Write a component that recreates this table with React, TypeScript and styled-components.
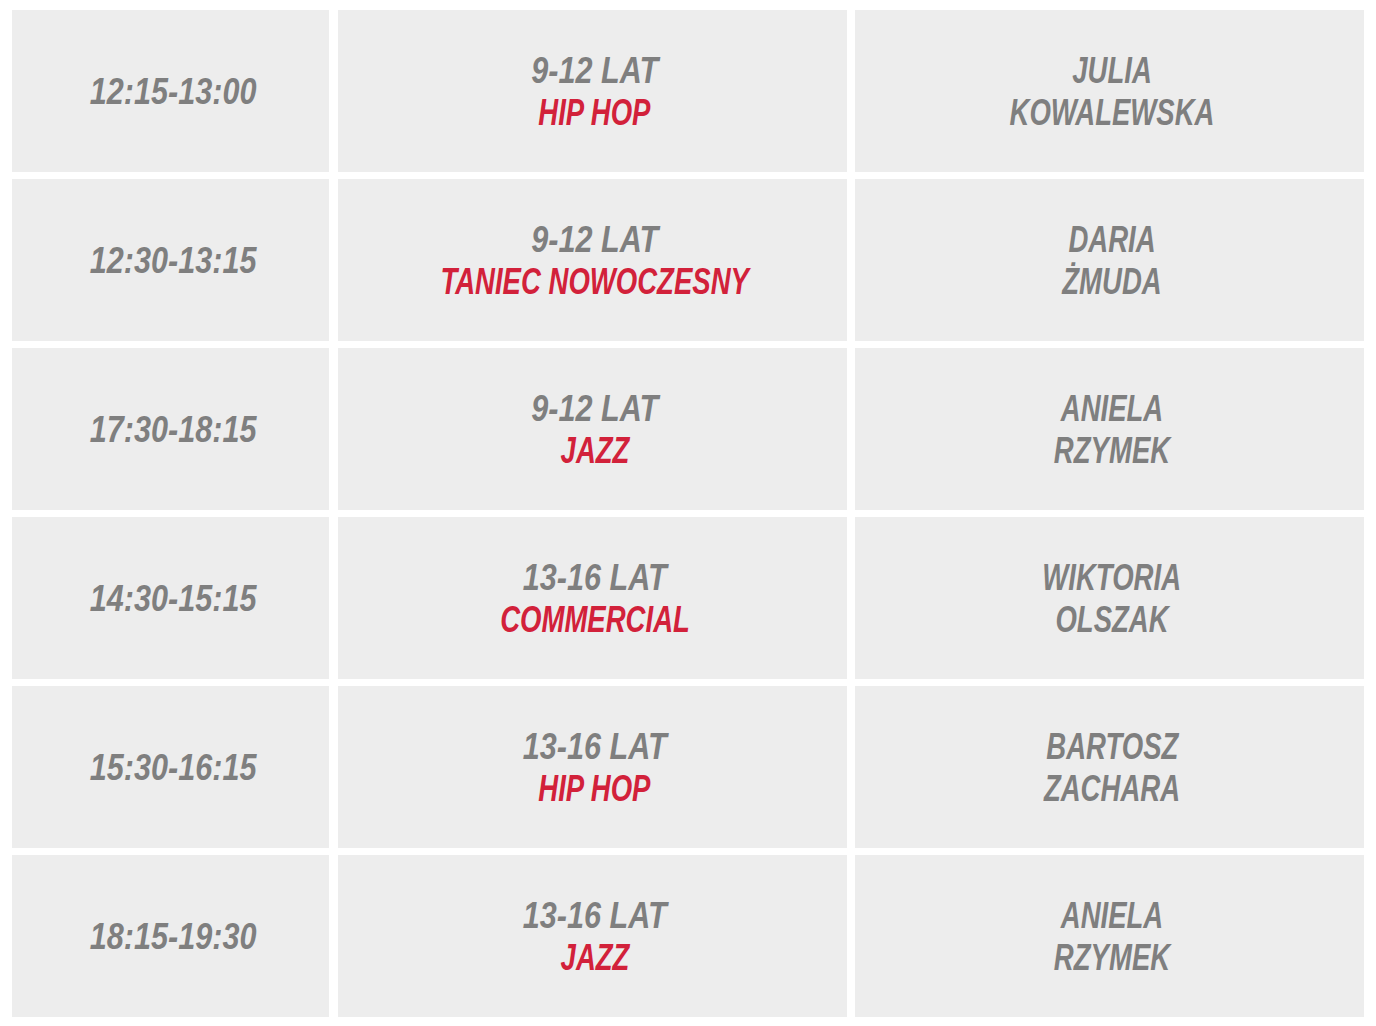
import styled, { createGlobalStyle } from "styled-components";

const GlobalStyle = createGlobalStyle`
  html, body {
    margin: 0;
    padding: 0;
    background: #ffffff;
  }
`;

const Table = styled.div`
  display: grid;
  grid-template-columns: 317px 509px 509px;
  grid-auto-rows: 162px;
  column-gap: 8.5px;
  row-gap: 7px;
  padding: 10px 11px 0 12px;
  width: 1376px;
  box-sizing: border-box;
`;

const Cell = styled.div`
  background-color: #ededed;
  display: flex;
  flex-direction: column;
  align-items: center;
  justify-content: center;
  padding: 2px 0 0 5px;
  box-sizing: border-box;
  font-family: "Liberation Sans", Arial, sans-serif;
  font-weight: 700;
  font-style: italic;
  font-size: 36px;
  line-height: 42px;
  text-transform: uppercase;
  text-align: center;
  white-space: nowrap;
`;

// the reference uses a condensed face; squeeze Liberation Sans to match
const Line = styled.span<{ $red?: boolean; $squeeze?: number }>`
  display: block;
  color: ${(p) => (p.$red ? "#d2213a" : "#7f7f7f")};
  transform: scaleX(${(p) => p.$squeeze ?? 0.765});
`;

interface Lesson {
  time: string;
  age: string;
  style: string;
  first: string;
  last: string;
}

const lessons: Lesson[] = [
  { time: "12:15-13:00", age: "9-12 LAT", style: "HIP HOP", first: "JULIA", last: "KOWALEWSKA" },
  { time: "12:30-13:15", age: "9-12 LAT", style: "TANIEC NOWOCZESNY", first: "DARIA", last: "ŻMUDA" },
  { time: "17:30-18:15", age: "9-12 LAT", style: "JAZZ", first: "ANIELA", last: "RZYMEK" },
  { time: "14:30-15:15", age: "13-16 LAT", style: "COMMERCIAL", first: "WIKTORIA", last: "OLSZAK" },
  { time: "15:30-16:15", age: "13-16 LAT", style: "HIP HOP", first: "BARTOSZ", last: "ZACHARA" },
  { time: "18:15-19:30", age: "13-16 LAT", style: "JAZZ", first: "ANIELA", last: "RZYMEK" },
];

function App() {
  return (
    <>
      <GlobalStyle />
      <Table>
        {lessons.map((l, i) => (
          <div key={i} style={{ display: "contents" }}>
            <Cell>
              <Line $squeeze={0.85}>{l.time}</Line>
            </Cell>
            <Cell>
              <Line $squeeze={0.85}>{l.age}</Line>
              <Line $red>{l.style}</Line>
            </Cell>
            <Cell>
              <Line>{l.first}</Line>
              <Line>{l.last}</Line>
            </Cell>
          </div>
        ))}
      </Table>
    </>
  );
}

export default App;
